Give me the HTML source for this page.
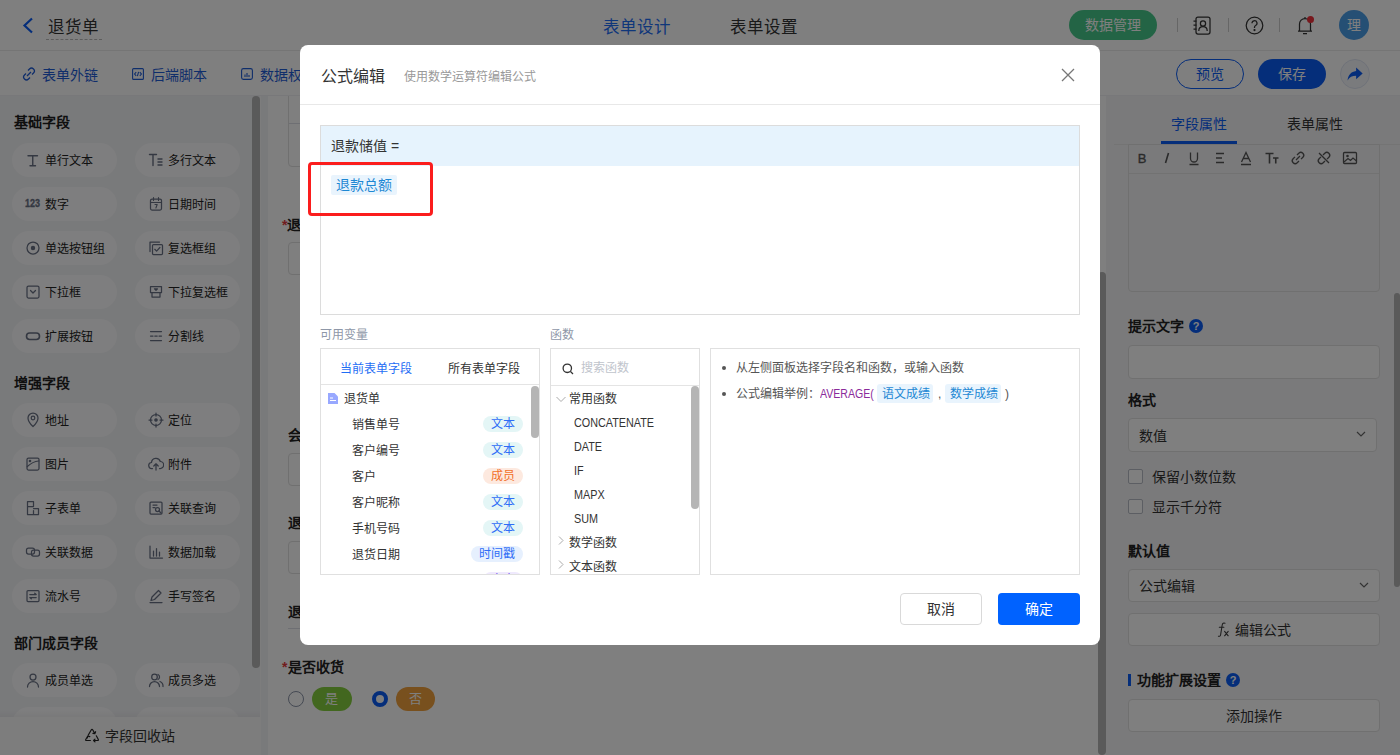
<!DOCTYPE html>
<html lang="zh-CN"><head><meta charset="utf-8">
<style>
*{box-sizing:border-box;margin:0;padding:0}
html,body{width:1400px;height:755px;overflow:hidden;background:#fff;font-family:"Liberation Sans",sans-serif;color:#333;position:relative}
.a{position:absolute}
.t{position:absolute;white-space:nowrap;line-height:20px}
svg{display:block}
#hdr{left:0;top:0;width:1400px;height:51px;background:#fff;border-bottom:1px solid #ebebeb}
#bar2{left:0;top:51px;width:1400px;height:45px;background:#fff;border-bottom:1px solid #f0f1f4}
#side{left:0;top:96px;width:268px;height:659px;background:#f3f4f7}
.sec{font-size:14px;font-weight:bold;color:#1f1f1f;left:14px}
.pill{position:absolute;width:105px;height:34px;border-radius:17px;background:#fdfdfe}
.pill .ic{position:absolute;left:13px;top:9px;width:16px;height:16px}
.pill span{position:absolute;left:33px;top:8px;font-size:12px;line-height:20px;color:#222;white-space:nowrap}
#canvas{left:268px;top:96px;width:842px;height:659px;background:#fff;overflow:hidden}
#right{left:1110px;top:96px;width:290px;height:659px;background:#f5f5f7}
.lbl{font-size:14px;color:#222;font-weight:bold}
.inp{position:absolute;border:1px solid #e0e0e0;border-radius:4px;background:#fff}
.rl{font-size:14px;font-weight:bold;color:#222;left:18px}
.tb{position:absolute;top:8px;width:16px;height:16px}
#mask{left:0;top:0;width:1400px;height:755px;background:rgba(0,0,0,.5)}
#modal{left:300px;top:45px;width:800px;height:600px;background:#fff;border-radius:8px;overflow:hidden}
.m12{font-size:12px;line-height:16px}
.vi{position:absolute;left:31px;font-size:12px;line-height:16px;color:#333}
.tag{position:absolute;height:16px;border-radius:8px;font-size:12px;line-height:16px;text-align:center}
.fn{position:absolute;left:23px;font-size:12px;line-height:16px;color:#333;transform:scaleX(.9);transform-origin:0 0}
</style></head>
<body>
<!-- ============ HEADER ============ -->
<div id="hdr" class="a">
  <svg class="a" style="left:22px;top:17px" width="12" height="17" viewBox="0 0 12 17"><path d="M10 1.5 L2.5 8.5 L10 15.5" fill="none" stroke="#0a5cf5" stroke-width="2.2"/></svg>
  <div class="t" style="left:47.5px;top:15.5px;font-size:16.5px;line-height:22px;color:#333">退货单</div>
  <div class="a" style="left:46px;top:39px;width:56px;border-top:1px dashed #bbb"></div>
  <div class="t" style="left:602.5px;top:17px;font-size:16.5px;color:#1f6ef5">表单设计</div>
  <div class="t" style="left:730px;top:17px;font-size:16.5px;color:#333">表单设置</div>
  <div class="a" style="left:1069px;top:10px;width:88px;height:30px;border-radius:15px;background:#47c98b"></div>
  <div class="t" style="left:1085px;top:15px;font-size:14px;color:#fff">数据管理</div>
  <div class="a" style="left:1177px;top:18px;width:1px;height:14px;background:#ccc"></div>
  <div class="a" style="left:1228px;top:18px;width:1px;height:14px;background:#ccc"></div>
  <div class="a" style="left:1279px;top:18px;width:1px;height:14px;background:#ccc"></div>
  <svg class="a" style="left:1192px;top:16px" width="20" height="19" viewBox="0 0 20 19" fill="none" stroke="#333" stroke-width="1.25"><rect x="4" y="1" width="14" height="17" rx="2"/><circle cx="11" cy="7.5" r="2.6"/><path d="M6.8 15c0-2.6 1.9-4.3 4.2-4.3s4.2 1.7 4.2 4.3M1.5 5h3M1.5 9h3M1.5 13h3"/></svg>
  <svg class="a" style="left:1245px;top:16px" width="19" height="19" viewBox="0 0 19 19" fill="none" stroke="#333" stroke-width="1.25"><circle cx="9.5" cy="9.5" r="8.3"/><path d="M7 7.3a2.5 2.5 0 1 1 3.6 2.2c-.8.4-1.1.9-1.1 1.8v.7"/><circle cx="9.5" cy="14" r=".5" fill="#333"/></svg>
  <svg class="a" style="left:1296px;top:15px" width="18" height="20" viewBox="0 0 18 20" fill="none" stroke="#333" stroke-width="1.25"><path d="M2 16h14M3.5 16V9a5.5 5.5 0 0 1 11 0v7M7 18.5h4M9 2v1.5"/></svg>
  <div class="a" style="left:1307px;top:16px;width:7px;height:7px;border-radius:4px;background:#f0303a"></div>
  <div class="a" style="left:1339px;top:10px;width:30px;height:30px;border-radius:15px;background:#4a9ee8"></div>
  <div class="t" style="left:1347px;top:15px;font-size:14px;color:#fff">理</div>
</div>
<div id="bar2" class="a">
  <svg class="a" style="left:22px;top:16px" width="14" height="14" viewBox="0 0 14 14" fill="none" stroke="#1f5cd6" stroke-width="1.3"><path d="M6 3.5l1.5-1.5a2.8 2.8 0 0 1 4 4L10 7.5M8 10.5L6.5 12a2.8 2.8 0 0 1-4-4L4 6.5M5 9l4-4"/></svg>
  <div class="t" style="left:42px;top:14px;font-size:14px;color:#1f5cd6">表单外链</div>
  <svg class="a" style="left:132px;top:17px" width="12" height="12" viewBox="0 0 12 12" fill="none" stroke="#1f5cd6" stroke-width="1.1"><rect x=".6" y=".6" width="10.8" height="10.8" rx="1"/><path d="M4.2 4.2L2.6 6l1.6 1.8M7.8 4.2L9.4 6 7.8 7.8M6.6 3.8L5.4 8.2"/></svg>
  <div class="t" style="left:151px;top:14px;font-size:14px;color:#1f5cd6">后端脚本</div>
  <svg class="a" style="left:241px;top:17px" width="12" height="12" viewBox="0 0 12 12" fill="none" stroke="#1f5cd6" stroke-width="1.1"><rect x=".6" y=".6" width="10.8" height="10.8" rx="1.8"/><path d="M4 6.5v2.5M6 5v4M8 7v2"/></svg>
  <div class="t" style="left:260px;top:14px;font-size:14px;color:#1f5cd6">数据权限</div>
  <div class="a" style="left:1176px;top:8px;width:68px;height:30px;border-radius:15px;border:1px solid #0a5cf5"></div>
  <div class="t" style="left:1196px;top:13px;font-size:14px;color:#0a5cf5">预览</div>
  <div class="a" style="left:1258px;top:8px;width:68px;height:30px;border-radius:15px;background:#0a5cf5"></div>
  <div class="t" style="left:1278px;top:13px;font-size:14px;color:#fff">保存</div>
  <div class="a" style="left:1340px;top:8px;width:30px;height:30px;border-radius:15px;border:1px solid #dfe5f2;background:#f4f6fb"></div>
  <svg class="a" style="left:1346px;top:14px" width="18" height="18" viewBox="0 0 16 16"><path d="M9 2.3l5.8 5.2L9 12.7V9.6c-3.5 0-6 1-7.6 4.1C1.9 9 4.5 6 9 5.4z" fill="#0a5cf5"/></svg>
</div>
<!-- ============ SIDEBAR ============ -->
<div id="side" class="a">
<div class="t sec" style="top:16px">基础字段</div>
<div class="pill" style="left:12px;top:47px"><svg class="ic" viewBox="0 0 16 16" fill="none" stroke="#687084" stroke-width="1.25" stroke-linecap="round" stroke-linejoin="round"><path d="M3 3.8h9.5M7.75 3.8v10M5 13.8h5.5" stroke-width="1.4"/></svg><span>单行文本</span></div>
<div class="pill" style="left:135px;top:47px"><svg class="ic" viewBox="0 0 16 16" fill="none" stroke="#687084" stroke-width="1.25" stroke-linecap="round" stroke-linejoin="round"><path d="M1.5 2.5h7M5 2.5v11M10 7h4M10 10h4M10 13h4" stroke-width="1.4"/></svg><span>多行文本</span></div>
<div class="pill" style="left:12px;top:91px"><svg class="ic" viewBox="0 0 16 16" fill="none" stroke="#687084" stroke-width="1.25" stroke-linecap="round" stroke-linejoin="round"><text x="0" y="10.8" font-size="10" font-weight="bold" fill="#687084" stroke="#687084" stroke-width=".3" font-family="Liberation Sans" textLength="15" lengthAdjust="spacingAndGlyphs">123</text></svg><span>数字</span></div>
<div class="pill" style="left:135px;top:91px"><svg class="ic" viewBox="0 0 16 16" fill="none" stroke="#687084" stroke-width="1.25" stroke-linecap="round" stroke-linejoin="round"><rect x="2.5" y="3" width="11" height="11" rx="1.5"/><path d="M2.5 6.5h11M5.5 1.5v3M10.5 1.5v3M7 8.5h2.2l-1.3 3.5" stroke-width="1.1"/></svg><span>日期时间</span></div>
<div class="pill" style="left:12px;top:135px"><svg class="ic" viewBox="0 0 16 16" fill="none" stroke="#687084" stroke-width="1.25" stroke-linecap="round" stroke-linejoin="round"><circle cx="8" cy="8" r="6"/><circle cx="8" cy="8" r="1.6" fill="#687084"/></svg><span>单选按钮组</span></div>
<div class="pill" style="left:135px;top:135px"><svg class="ic" viewBox="0 0 16 16" fill="none" stroke="#687084" stroke-width="1.25" stroke-linecap="round" stroke-linejoin="round"><path d="M2 11.5V2h9.5"/><rect x="4.5" y="4.5" width="10" height="10" rx="1"/><path d="M6.8 9.3l1.8 1.8 3.3-3.6"/></svg><span>复选框组</span></div>
<div class="pill" style="left:12px;top:179px"><svg class="ic" viewBox="0 0 16 16" fill="none" stroke="#687084" stroke-width="1.25" stroke-linecap="round" stroke-linejoin="round"><rect x="2" y="2" width="12" height="12" rx="1.5"/><path d="M5.5 6.5L8 9l2.5-2.5"/></svg><span>下拉框</span></div>
<div class="pill" style="left:135px;top:179px"><svg class="ic" viewBox="0 0 16 16" fill="none" stroke="#687084" stroke-width="1.25" stroke-linecap="round" stroke-linejoin="round"><path d="M2.5 2.5h11v6h-11zM4 8.5v4.5h8v-4.5M6.5 4.8h3l-1.5 1.5z"/></svg><span>下拉复选框</span></div>
<div class="pill" style="left:12px;top:223px"><svg class="ic" viewBox="0 0 16 16" fill="none" stroke="#687084" stroke-width="1.25" stroke-linecap="round" stroke-linejoin="round"><rect x="1.5" y="5" width="13" height="6.5" rx="3.2" stroke-width="1.6"/></svg><span>扩展按钮</span></div>
<div class="pill" style="left:135px;top:223px"><svg class="ic" viewBox="0 0 16 16" fill="none" stroke="#687084" stroke-width="1.25" stroke-linecap="round" stroke-linejoin="round"><path d="M2.5 3.5h11M2.5 8h2.5M6.8 8h2.4M11 8h2.5M2.5 12.5h11"/></svg><span>分割线</span></div>
<div class="t sec" style="top:277px">增强字段</div>
<div class="pill" style="left:12px;top:307px"><svg class="ic" viewBox="0 0 16 16" fill="none" stroke="#687084" stroke-width="1.25" stroke-linecap="round" stroke-linejoin="round"><path d="M8 14.5s-5-4.5-5-8.5a5 5 0 0 1 10 0c0 4-5 8.5-5 8.5z"/><circle cx="8" cy="6" r="1.8"/></svg><span>地址</span></div>
<div class="pill" style="left:135px;top:307px"><svg class="ic" viewBox="0 0 16 16" fill="none" stroke="#687084" stroke-width="1.25" stroke-linecap="round" stroke-linejoin="round"><circle cx="8" cy="8" r="5.5"/><circle cx="8" cy="8" r="1.2" fill="#687084"/><path d="M8 1v3M8 12v3M1 8h3M12 8h3"/></svg><span>定位</span></div>
<div class="pill" style="left:12px;top:351px"><svg class="ic" viewBox="0 0 16 16" fill="none" stroke="#687084" stroke-width="1.25" stroke-linecap="round" stroke-linejoin="round"><rect x="2" y="2" width="12" height="12" rx="1.5"/><path d="M2.3 10.5C5 8 8 5.5 13.7 5"/><circle cx="5" cy="5" r="0.7"/></svg><span>图片</span></div>
<div class="pill" style="left:135px;top:351px"><svg class="ic" viewBox="0 0 16 16" fill="none" stroke="#687084" stroke-width="1.25" stroke-linecap="round" stroke-linejoin="round"><path d="M4.5 12.5H4a3 3 0 0 1-.5-6A4.5 4.5 0 0 1 12.3 5.5 3.5 3.5 0 0 1 12 12.5h-.5M8 8v6M5.8 10L8 7.8 10.2 10"/></svg><span>附件</span></div>
<div class="pill" style="left:12px;top:395px"><svg class="ic" viewBox="0 0 16 16" fill="none" stroke="#687084" stroke-width="1.25" stroke-linecap="round" stroke-linejoin="round"><path d="M2.5 1.5h6v5h-6zM2.5 6.5v8h11v-6h-5M8.5 10.5v4"/></svg><span>子表单</span></div>
<div class="pill" style="left:135px;top:395px"><svg class="ic" viewBox="0 0 16 16" fill="none" stroke="#687084" stroke-width="1.25" stroke-linecap="round" stroke-linejoin="round"><rect x="2" y="2" width="12" height="12" rx="1"/><path d="M5 5h4M5 7.5h2"/><circle cx="9.5" cy="9.5" r="2"/><path d="M11 11l2 2"/></svg><span>关联查询</span></div>
<div class="pill" style="left:12px;top:439px"><svg class="ic" viewBox="0 0 16 16" fill="none" stroke="#687084" stroke-width="1.25" stroke-linecap="round" stroke-linejoin="round"><rect x="1.5" y="4" width="8" height="6" rx="2"/><rect x="6.5" y="6" width="8" height="6" rx="2"/></svg><span>关联数据</span></div>
<div class="pill" style="left:135px;top:439px"><svg class="ic" viewBox="0 0 16 16" fill="none" stroke="#687084" stroke-width="1.25" stroke-linecap="round" stroke-linejoin="round"><path d="M2 2v12h12.5M5.5 7v5M8.5 4.5v7.5M11.5 8v4"/></svg><span>数据加载</span></div>
<div class="pill" style="left:12px;top:483px"><svg class="ic" viewBox="0 0 16 16" fill="none" stroke="#687084" stroke-width="1.25" stroke-linecap="round" stroke-linejoin="round"><rect x="2" y="2.5" width="12" height="11" rx="1"/><path d="M4.8 6.5h6.4l-1.5-1.3M11.2 9.5H4.8l1.5 1.3"/></svg><span>流水号</span></div>
<div class="pill" style="left:135px;top:483px"><svg class="ic" viewBox="0 0 16 16" fill="none" stroke="#687084" stroke-width="1.25" stroke-linecap="round" stroke-linejoin="round"><path d="M3 12.5l1-3.5 6.5-6.5 2.5 2.5L6.5 11.5zM2 14.5h12"/></svg><span>手写签名</span></div>
<div class="t sec" style="top:537px">部门成员字段</div>
<div class="pill" style="left:12px;top:567px"><svg class="ic" viewBox="0 0 16 16" fill="none" stroke="#687084" stroke-width="1.25" stroke-linecap="round" stroke-linejoin="round"><circle cx="8" cy="5" r="3"/><path d="M2.5 15a5.5 5.5 0 0 1 11 0"/></svg><span>成员单选</span></div>
<div class="pill" style="left:135px;top:567px"><svg class="ic" viewBox="0 0 16 16" fill="none" stroke="#687084" stroke-width="1.25" stroke-linecap="round" stroke-linejoin="round"><circle cx="6.5" cy="5" r="2.8"/><path d="M1.5 14.5a5 5 0 0 1 10 0M10 2.5a2.8 2.8 0 0 1 0 5M12 9.5a5 5 0 0 1 3 5"/></svg><span>成员多选</span></div>
<div class="pill" style="left:12px;top:611px"><svg class="ic" viewBox="0 0 16 16" fill="none" stroke="#687084" stroke-width="1.25" stroke-linecap="round" stroke-linejoin="round"><circle cx="8" cy="5" r="3"/><path d="M2.5 15a5.5 5.5 0 0 1 11 0"/></svg><span>部门单选</span></div>
<div class="pill" style="left:135px;top:611px"><svg class="ic" viewBox="0 0 16 16" fill="none" stroke="#687084" stroke-width="1.25" stroke-linecap="round" stroke-linejoin="round"><circle cx="8" cy="5" r="3"/><path d="M2.5 15a5.5 5.5 0 0 1 11 0"/></svg><span>部门多选</span></div>
  <div class="a" style="left:252px;top:0;width:8px;height:572px;border-radius:4px;background:#b4b4b4"></div><div class="a" style="left:260px;top:0;width:1px;height:659px;background:#fafafa"></div>
  <div class="a" style="left:0;top:614px;width:260px;height:7px;background:linear-gradient(rgba(0,0,0,0),rgba(0,0,0,.04))"></div>
  <div class="a" style="left:0;top:621px;width:260px;height:38px;background:#fafafa"></div>
  <svg class="a" style="left:84px;top:631px" width="16" height="16" viewBox="0 0 16 16" fill="none" stroke="#222" stroke-width="1.2" stroke-linecap="round" stroke-linejoin="round"><path d="M4.3 8L7.2 3Q8 1.7 8.8 3L10.9 6.6M10.9 6.6L8.9 6.4M10.9 6.6L11.6 4.7M12.3 8.8L14.2 12.2Q14.9 13.5 13.4 13.5L9.6 13.5M9.6 13.5L11 12.1M9.6 13.5L11 14.9M6.4 13.5L2.6 13.5Q1.1 13.5 1.9 12.2L3.8 9M3.8 9L3.3 11M3.8 9L5.8 9.6"/></svg>
  <div class="t" style="left:105px;top:630px;font-size:14px;color:#333">字段回收站</div>
</div>
<!-- ============ CANVAS ============ -->
<div id="canvas" class="a">
  <div class="inp" style="left:20px;top:-20px;width:800px;height:91px"></div>
  <div class="a" style="left:21px;top:27px;width:798px;height:1px;background:#dcdfe6"></div>
  <div class="t lbl" style="left:14px;top:119px"><span style="color:#e4393c">*</span>退款储值</div>
  <div class="inp" style="left:20px;top:146px;width:800px;height:33px"></div>
  <div class="t lbl" style="left:20px;top:329px">会员储值</div>
  <div class="inp" style="left:20px;top:357px;width:800px;height:33px"></div>
  <div class="t lbl" style="left:20px;top:417px">退款总额</div>
  <div class="inp" style="left:20px;top:445px;width:800px;height:33px"></div>
  <div class="t lbl" style="left:20px;top:506px">退款说明</div>
  <div class="a" style="left:20px;top:532px;width:800px;height:1px;background:#dcdfe6"></div>
  <div class="t lbl" style="left:14px;top:561px;font-weight:bold"><span style="color:#e4393c;margin-right:1px">*</span>是否收货</div>
  <div class="a" style="left:20px;top:595px;width:16px;height:16px;border-radius:8px;border:1px solid #8a93a6;background:#fff"></div>
  <div class="a" style="left:44px;top:591px;width:40px;height:24px;border-radius:12px;background:#85cf3f"></div>
  <div class="t" style="left:57px;top:593px;font-size:13px;color:#fff">是</div>
  <div class="a" style="left:104px;top:595px;width:16px;height:16px;border-radius:8px;border:4.5px solid #0a5cf5;background:#fff"></div>
  <div class="a" style="left:128px;top:591px;width:39px;height:24px;border-radius:12px;background:#f0a03c"></div>
  <div class="t" style="left:141px;top:593px;font-size:13px;color:#fff">否</div>
  <div class="a" style="left:830px;top:176px;width:8px;height:483px;border-radius:4px;background:#b4b4b4"></div>
</div>
<!-- ============ RIGHT PANEL ============ -->
<div class="a" style="left:1106px;top:96px;width:4px;height:659px;background:#f5f5f7"></div>
<div id="right" class="a">
  <div class="t" style="left:61px;top:18px;font-size:14px;color:#0a5cf5">字段属性</div>
  <div class="t" style="left:177px;top:18px;font-size:14px;color:#333">表单属性</div>
  <div class="a" style="left:51px;top:45px;width:76px;height:3px;background:#0a5cf5"></div>
  <div class="a" style="left:4px;top:48px;width:286px;height:1px;background:#e8e8e8"></div>
  <div class="inp" style="left:18px;top:48px;width:252px;height:148px;border-radius:0 0 4px 4px;background:transparent"></div>
  <div class="a" style="left:19px;top:77px;width:250px;height:1px;background:#e4e4e4"></div>
  <svg class="tb" style="left:24px;top:54px" width="16" height="16" viewBox="0 0 16 16"><text x="8" y="13" text-anchor="middle" font-size="13" fill="#555" stroke="#555" stroke-width=".35" font-family="Liberation Sans">B</text></svg>
  <svg class="tb" style="left:49px;top:54px" width="16" height="16" viewBox="0 0 16 16"><path d="M9.5 3L6.5 13" stroke="#555" stroke-width="1.6"/></svg>
  <svg class="tb" style="left:76px;top:54px" width="16" height="16" viewBox="0 0 16 16"><path d="M4.5 2.5v6a3.5 3.5 0 0 0 7 0v-6M3.5 14.5h9" stroke="#555" stroke-width="1.3" fill="none"/></svg>
  <svg class="tb" style="left:102px;top:54px" width="16" height="16" viewBox="0 0 16 16"><path d="M4 3.5h8M4 8h6M4 12.5h8" stroke="#555" stroke-width="1.3"/></svg>
  <svg class="tb" style="left:128px;top:54px" width="16" height="16" viewBox="0 0 16 16"><path d="M3.5 12L8 2.5 12.5 12M5.2 8.5h5.6M3 14.5h10" stroke="#555" stroke-width="1.3" fill="none"/></svg>
  <svg class="tb" style="left:154px;top:54px" width="16" height="16" viewBox="0 0 16 16"><path d="M1.5 3.5h8M5.5 3.5v10M9 8h5.5M11.75 8v5.5" stroke="#555" stroke-width="1.6" fill="none"/></svg>
  <svg class="tb" style="left:180px;top:54px" width="16" height="16" viewBox="0 0 16 16"><path d="M7 5l1.8-1.8a2.9 2.9 0 0 1 4.1 4.1L11 9.1M9 11l-1.8 1.8a2.9 2.9 0 0 1-4.1-4.1L5 6.9M6 10l4-4" stroke="#555" stroke-width="1.3" fill="none"/></svg>
  <svg class="tb" style="left:206px;top:54px" width="16" height="16" viewBox="0 0 16 16"><path d="M7 5l1.8-1.8a2.9 2.9 0 0 1 4.1 4.1L11 9.1M9 11l-1.8 1.8a2.9 2.9 0 0 1-4.1-4.1L5 6.9M3 3l10 10" stroke="#555" stroke-width="1.3" fill="none"/></svg>
  <svg class="tb" style="left:232px;top:54px" width="16" height="16" viewBox="0 0 16 16"><rect x="1.5" y="2.5" width="13" height="11" rx="1" stroke="#555" stroke-width="1.3" fill="none"/><circle cx="5.5" cy="6" r="1.3" fill="#555"/><path d="M2 12l4-3.5 2.5 2 2.5-2.5 3.5 3" stroke="#555" stroke-width="1.2" fill="none"/></svg>
  <div class="t rl" style="top:220px">提示文字</div>
  <div class="a" style="left:79px;top:223px;width:14px;height:14px;border-radius:7px;background:#0a5cf5;color:#fff;font-size:11px;line-height:14px;text-align:center;font-weight:bold">?</div>
  <div class="inp" style="left:18px;top:249px;width:252px;height:34px"></div>
  <div class="t rl" style="top:294px">格式</div>
  <div class="inp" style="left:18px;top:322px;width:249px;height:34px"></div>
  <div class="t" style="left:29px;top:330px;font-size:14px;color:#333">数值</div>
  <svg class="a" style="left:246px;top:334px" width="10" height="8" viewBox="0 0 10 8" fill="none" stroke="#666" stroke-width="1.2"><path d="M1 2l4 4 4-4"/></svg>
  <div class="a" style="left:18px;top:373px;width:15px;height:15px;border:1px solid #b8bcc6;border-radius:2px;background:#fff"></div>
  <div class="t" style="left:42px;top:371px;font-size:14px;color:#333">保留小数位数</div>
  <div class="a" style="left:18px;top:403px;width:15px;height:15px;border:1px solid #b8bcc6;border-radius:2px;background:#fff"></div>
  <div class="t" style="left:42px;top:401px;font-size:14px;color:#333">显示千分符</div>
  <div class="t rl" style="top:445px">默认值</div>
  <div class="inp" style="left:18px;top:473px;width:252px;height:33px"></div>
  <div class="t" style="left:29px;top:480px;font-size:14px;color:#333">公式编辑</div>
  <svg class="a" style="left:249px;top:485px" width="10" height="8" viewBox="0 0 10 8" fill="none" stroke="#666" stroke-width="1.2"><path d="M1 2l4 4 4-4"/></svg>
  <div class="inp" style="left:18px;top:517px;width:252px;height:33px"></div>
  <svg class="a" style="left:107px;top:526px" width="14" height="15" viewBox="0 0 14 15" fill="none" stroke="#3a3a3a" stroke-width="1.05" stroke-linecap="round"><path d="M8 1.3C6.6.6 5.5 1.3 5.2 3L3.6 12.8C3.3 14.2 2.6 14.6 1.4 14.2M2.3 5.2h4.6M7.6 9.3l3.6 4.5M11.2 9.3l-3.6 4.5"/></svg>
  <div class="t" style="left:125px;top:524px;font-size:14px;color:#333">编辑公式</div>
  <div class="a" style="left:18px;top:578px;width:3px;height:12px;background:#0a5cf5"></div>
  <div class="t rl" style="left:27px;top:574px">功能扩展设置</div>
  <div class="a" style="left:116px;top:577px;width:14px;height:14px;border-radius:7px;background:#0a5cf5;color:#fff;font-size:11px;line-height:14px;text-align:center;font-weight:bold">?</div>
  <div class="inp" style="left:18px;top:603px;width:252px;height:33px"></div>
  <div class="t" style="left:116px;top:610px;font-size:14px;color:#333">添加操作</div>
  <div class="a" style="left:284px;top:197px;width:6px;height:294px;border-radius:3px;background:#b4b4b4"></div>
</div>
<div id="mask" class="a"></div>
<!-- ============ MODAL ============ -->
<div id="modal" class="a">
  <div class="t" style="left:20.5px;top:21px;font-size:16px;line-height:22px;color:#333">公式编辑</div>
  <div class="t" style="left:104px;top:22px;font-size:12px;color:#999">使用数学运算符编辑公式</div>
  <svg class="a" style="left:761px;top:23px" width="14" height="14" viewBox="0 0 14 14" fill="none" stroke="#777" stroke-width="1.3"><path d="M1 1l12 12M13 1L1 13"/></svg>
  <div class="a" style="left:0;top:59px;width:800px;height:1px;background:#e8e8e8"></div>
  <!-- formula box -->
  <div class="a" style="left:20px;top:80px;width:760px;height:190px;border:1px solid #dcdcdc"></div>
  <div class="a" style="left:21px;top:81px;width:758px;height:40px;background:#e6f3fd"></div>
  <div class="t" style="left:31px;top:91px;font-size:14px;color:#333">退款储值 =</div>
  <div class="a" style="left:31px;top:130px;width:66px;height:20px;border-radius:2px;background:#e9f4fd"></div>
  <div class="t" style="left:36px;top:130px;font-size:14px;color:#1e88d4">退款总额</div>
  <div class="a" style="left:8px;top:117px;width:125px;height:54px;border:3px solid #fb1d1d;border-radius:4px"></div>
  <!-- labels -->
  <div class="t m12" style="left:20px;top:282px;color:#8e97a8">可用变量</div>
  <div class="t m12" style="left:250px;top:282px;color:#8e97a8">函数</div>
  <!-- variables box -->
  <div class="a" style="left:20px;top:303px;width:220px;height:227px;border:1px solid #e0e0e0;overflow:hidden">
    <div class="t m12" style="left:19px;top:12px;color:#1f6ef5">当前表单字段</div>
    <div class="t m12" style="left:127px;top:12px;color:#333">所有表单字段</div>
    <div class="a" style="left:0;top:35px;width:220px;height:1px;background:#e4e4e4"></div>
    <svg class="a" style="left:7px;top:44px" width="10" height="11" viewBox="0 0 10 11"><path d="M0 0h6.5l3.5 3.5V11H0z" fill="#98a8ff"/><path d="M2 5h3M2 7.5h6" stroke="#fff" stroke-width="1"/></svg>
    <div class="t m12" style="left:23px;top:42px;color:#333">退货单</div>
    <div class="vi" style="top:68px">销售单号</div>
    <div class="tag" style="left:162px;top:66.5px;width:40px;background:#e4f6f6;color:#2f6df6">文本</div>
    <div class="vi" style="top:94px">客户编号</div>
    <div class="tag" style="left:162px;top:92.5px;width:40px;background:#e4f6f6;color:#2f6df6">文本</div>
    <div class="vi" style="top:120px">客户</div>
    <div class="tag" style="left:162px;top:118.5px;width:40px;background:#fde9df;color:#f2702a">成员</div>
    <div class="vi" style="top:146px">客户昵称</div>
    <div class="tag" style="left:162px;top:144.5px;width:40px;background:#e4f6f6;color:#2f6df6">文本</div>
    <div class="vi" style="top:172px">手机号码</div>
    <div class="tag" style="left:162px;top:170.5px;width:40px;background:#e4f6f6;color:#2f6df6">文本</div>
    <div class="vi" style="top:198px">退货日期</div>
    <div class="tag" style="left:150px;top:196.5px;width:52px;background:#e6f0fe;color:#2f6df6">时间戳</div>
    <div class="vi" style="top:224px">退货原因</div>
    <div class="tag" style="left:162px;top:222.5px;width:40px;background:#efe9fd;color:#6d4cf0">文本</div>
    <div class="a" style="left:210px;top:37px;width:8px;height:52px;border-radius:4px;background:#b5b5b5"></div>
  </div>
  <!-- functions box -->
  <div class="a" style="left:250px;top:303px;width:150px;height:227px;border:1px solid #e0e0e0;overflow:hidden">
    <svg class="a" style="left:11px;top:14px" width="12" height="12" viewBox="0 0 12 12" fill="none" stroke="#333" stroke-width="1.3"><circle cx="5.3" cy="5.3" r="4.2"/><path d="M8.5 8.5l2.5 2.5"/></svg>
    <div class="t m12" style="left:30px;top:11px;color:#c0c4cc">搜索函数</div>
    <div class="a" style="left:0;top:36px;width:150px;height:1px;background:#e4e4e4"></div>
    <svg class="a" style="left:5px;top:47px" width="10" height="7" viewBox="0 0 10 7" fill="none" stroke="#aaa" stroke-width="1"><path d="M.5 1l4.5 4.5L9.5 1"/></svg>
    <div class="t m12" style="left:18px;top:42px;color:#333">常用函数</div>
    <div class="fn" style="top:66px">CONCATENATE</div>
    <div class="fn" style="top:90px">DATE</div>
    <div class="fn" style="top:114px">IF</div>
    <div class="fn" style="top:138px">MAPX</div>
    <div class="fn" style="top:162px">SUM</div>
    <svg class="a" style="left:7px;top:187px" width="6" height="9" viewBox="0 0 6 9" fill="none" stroke="#aaa" stroke-width="1"><path d="M1 .5l4 4-4 4"/></svg>
    <div class="t m12" style="left:18px;top:186px;color:#333">数学函数</div>
    <svg class="a" style="left:7px;top:211px" width="6" height="9" viewBox="0 0 6 9" fill="none" stroke="#aaa" stroke-width="1"><path d="M1 .5l4 4-4 4"/></svg>
    <div class="t m12" style="left:18px;top:210px;color:#333">文本函数</div>
    <div class="a" style="left:140px;top:37px;width:8px;height:123px;border-radius:4px;background:#b5b5b5"></div>
  </div>
  <!-- desc box -->
  <div class="a" style="left:410px;top:303px;width:370px;height:227px;border:1px solid #e0e0e0">
    <div class="a" style="left:11px;top:17px;width:4px;height:4px;border-radius:2px;background:#555"></div>
    <div class="t m12" style="left:25px;top:11px;color:#555">从左侧面板选择字段名和函数，或输入函数</div>
    <div class="a" style="left:11px;top:43px;width:4px;height:4px;border-radius:2px;background:#555"></div>
    <div class="t m12" style="left:25px;top:37px;color:#555">公式编辑举例：<span style="color:#8b2a9b;display:inline-block;transform:scaleX(.88);transform-origin:0 0">AVERAGE(</span></div>
    <div class="a" style="left:166px;top:35px;width:56px;height:19px;border-radius:3px;background:#e9f4fd"></div>
    <div class="t m12" style="left:171px;top:37px;color:#1e88d4">语文成绩</div>
    <div class="t m12" style="left:227px;top:37px;color:#555">,</div>
    <div class="a" style="left:234px;top:35px;width:56px;height:19px;border-radius:3px;background:#e9f4fd"></div>
    <div class="t m12" style="left:239px;top:37px;color:#1e88d4">数学成绩</div>
    <div class="t m12" style="left:294px;top:37px;color:#555">)</div>
  </div>
  <!-- footer -->
  <div class="a" style="left:600px;top:548px;width:82px;height:32px;border:1px solid #d9d9d9;border-radius:4px"></div>
  <div class="t" style="left:627px;top:554px;font-size:14px;color:#333">取消</div>
  <div class="a" style="left:698px;top:548px;width:82px;height:32px;border-radius:4px;background:#0062ff"></div>
  <div class="t" style="left:725px;top:554px;font-size:14px;color:#fff">确定</div>
</div>
</body></html>
